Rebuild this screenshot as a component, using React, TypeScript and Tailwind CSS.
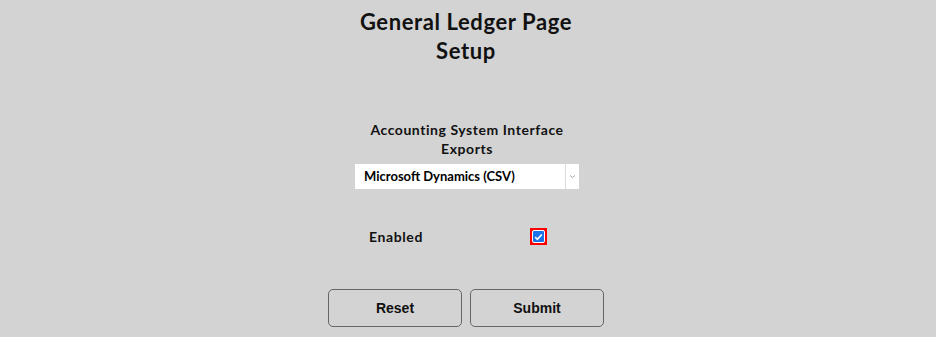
import React from "react";

export default function App() {
  const geo = { fontFamily: "Lato, 'Noto Sans', sans-serif" };
  return (
    <div className="w-[936px] h-[337px] bg-[#d3d3d3] overflow-hidden flex flex-col items-center">
      <h1
        style={geo}
        className="mt-[7px] w-[260px] text-center text-[22px] leading-[29px] font-bold tracking-[0.6px] text-[#111] ml-[-4px]"
      >
        General Ledger Page Setup
      </h1>
      <div className="mt-[55px] w-[224px] flex flex-col ml-[-2px]">
        <div style={geo} className="text-center text-[14px] leading-[19px] font-bold tracking-[0.55px] text-[#111] px-[4px]">
          Accounting System Interface Exports
        </div>
        <div className="mt-[6px] h-[25px] bg-white flex items-stretch">
          <div style={geo} className="flex-1 flex items-center pl-[9px] text-[13px] font-bold text-black">
            Microsoft Dynamics (CSV)
          </div>
          <div className="w-[14px] border-l border-[#dcdcdc] flex items-center justify-center">
            <svg width="7" height="5" viewBox="0 0 7 5">
              <path d="M1 1.5 L3.5 3.5 L6 1.5" stroke="#a0a0a0" strokeWidth="1" fill="none" />
            </svg>
          </div>
        </div>
        <div className="mt-[38px] flex items-center h-[19px]">
          <span style={geo} className="ml-[14px] text-[14px] font-bold tracking-[0.6px] text-[#111]">Enabled</span>
          <div className="ml-[107px] w-[17px] h-[17px] bg-[#ff0000] flex items-center justify-center">
            <div className="w-[13px] h-[13px] bg-[#1a73e8] rounded-[2px] border border-white flex items-center justify-center">
              <svg width="9" height="8" viewBox="0 0 9 8">
                <path d="M1.2 4.2 L3.4 6.3 L7.8 1.5" stroke="white" strokeWidth="1.7" fill="none" />
              </svg>
            </div>
          </div>
        </div>
      </div>
      <div className="mt-[43px] flex gap-[8px] ml-[-4px]">
        {["Reset", "Submit"].map((t) => (
          <button
            key={t}
            style={{ fontFamily: "'Liberation Sans', Arial, sans-serif" }}
            className="w-[134px] h-[38px] rounded-[5px] border border-[#666] bg-[#d3d3d3] text-[14px] font-bold text-[#111]"
          >
            {t}
          </button>
        ))}
      </div>
    </div>
  );
}
